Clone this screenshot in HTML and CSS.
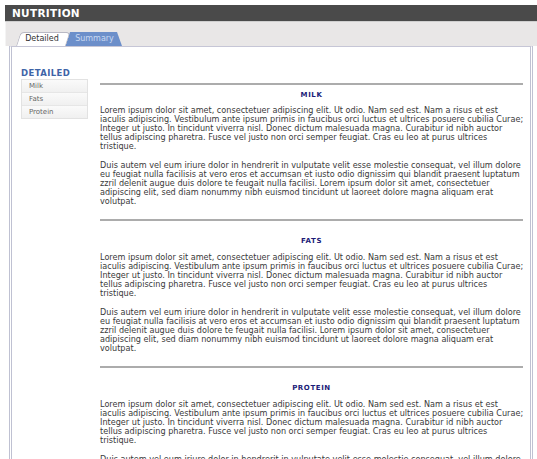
FILE: index.html
```html
<!DOCTYPE html>
<html>
<head>
<meta charset="utf-8">
<link rel="stylesheet" href="styles.css">
</head>
<body>
<div class="page">
  <div class="titlebar">NUTRITION</div>
  <div class="tabbar">
    <div class="tab tab-active">Detailed</div>
    <div class="tab tab-off">Summary</div>
  </div>
  <div class="panel">
    <div class="sidebar">
      <div class="side-title">DETAILED</div>
      <ul class="menu">
        <li>Milk</li>
        <li>Fats</li>
        <li>Protein</li>
      </ul>
    </div>
    <div class="main">
      <div class="section first">
        <h3>MILK</h3>
        <p>Lorem ipsum dolor sit amet, consectetuer adipiscing elit. Ut odio. Nam sed est. Nam a risus et est iaculis adipiscing. Vestibulum ante ipsum primis in faucibus orci luctus et ultrices posuere cubilia Curae; Integer ut justo. In tincidunt viverra nisl. Donec dictum malesuada magna. Curabitur id nibh auctor tellus adipiscing pharetra. Fusce vel justo non orci semper feugiat. Cras eu leo at purus ultrices tristique.</p>
        <p>Duis autem vel eum iriure dolor in hendrerit in vulputate velit esse molestie consequat, vel illum dolore eu feugiat nulla facilisis at vero eros et accumsan et iusto odio dignissim qui blandit praesent luptatum zzril delenit augue duis dolore te feugait nulla facilisi. Lorem ipsum dolor sit amet, consectetuer adipiscing elit, sed diam nonummy nibh euismod tincidunt ut laoreet dolore magna aliquam erat volutpat.</p>
      </div>
      <div class="section">
        <h3>FATS</h3>
        <p>Lorem ipsum dolor sit amet, consectetuer adipiscing elit. Ut odio. Nam sed est. Nam a risus et est iaculis adipiscing. Vestibulum ante ipsum primis in faucibus orci luctus et ultrices posuere cubilia Curae; Integer ut justo. In tincidunt viverra nisl. Donec dictum malesuada magna. Curabitur id nibh auctor tellus adipiscing pharetra. Fusce vel justo non orci semper feugiat. Cras eu leo at purus ultrices tristique.</p>
        <p>Duis autem vel eum iriure dolor in hendrerit in vulputate velit esse molestie consequat, vel illum dolore eu feugiat nulla facilisis at vero eros et accumsan et iusto odio dignissim qui blandit praesent luptatum zzril delenit augue duis dolore te feugait nulla facilisi. Lorem ipsum dolor sit amet, consectetuer adipiscing elit, sed diam nonummy nibh euismod tincidunt ut laoreet dolore magna aliquam erat volutpat.</p>
      </div>
      <div class="section">
        <h3>PROTEIN</h3>
        <p>Lorem ipsum dolor sit amet, consectetuer adipiscing elit. Ut odio. Nam sed est. Nam a risus et est iaculis adipiscing. Vestibulum ante ipsum primis in faucibus orci luctus et ultrices posuere cubilia Curae; Integer ut justo. In tincidunt viverra nisl. Donec dictum malesuada magna. Curabitur id nibh auctor tellus adipiscing pharetra. Fusce vel justo non orci semper feugiat. Cras eu leo at purus ultrices tristique.</p>
        <p>Duis autem vel eum iriure dolor in hendrerit in vulputate velit esse molestie consequat, vel illum dolore eu feugiat nulla facilisis at vero eros et accumsan et iusto odio dignissim qui blandit praesent luptatum zzril delenit augue duis dolore te feugait nulla facilisi. Lorem ipsum dolor sit amet, consectetuer adipiscing elit, sed diam nonummy nibh euismod tincidunt ut laoreet dolore magna aliquam erat volutpat.</p>
      </div>
    </div>
  </div>
</div>
</body>
</html>
```

FILE: styles.css
```css
html, body {
  margin: 0;
  padding: 0;
  background: #ffffff;
}
body {
  font-family: "DejaVu Sans", Verdana, sans-serif;
  color: #333333;
  overflow: hidden;
}
.page {
  padding: 5px 0 0 5px;
}
.titlebar {
  background: #4a4a4a;
  color: #ffffff;
  font-weight: bold;
  font-size: 10.5px;
  letter-spacing: 0.3px;
  height: 16px;
  line-height: 17px;
  padding-left: 7px;
  border-bottom: 1px solid #cfcfcf;
}
.tabbar {
  position: relative;
  z-index: 0;
  background: #e9e7e7;
  height: 24px;
  display: flex;
  align-items: flex-end;
  padding-left: 10px;
  border-left: 1px solid #f4f4f4;
}
.tab {
  position: relative;
  height: 14px;
  line-height: 14px;
  font-size: 8px;
  text-align: center;
}
.tab::before {
  content: "";
  position: absolute;
  top: 0;
  bottom: 0;
  left: 0;
  right: 0;
  z-index: -1;
  border-radius: 4px 4px 0 0;
}
.tab-active {
  width: 48px;
  color: #333333;
  z-index: 2;
  padding-left: 2px;
}
.tab-active::before {
  background: #ffffff;
  border: 1px solid #b9b9c4;
  border-bottom: none;
  transform: skewX(-18deg);
  transform-origin: bottom left;
}
.tab-off {
  width: 55px;
  color: #c9d9f2;
  z-index: 1;
  margin-left: -1px;
  padding-left: 2px;
}
.tab-off::before {
  background: #6c8fca;
  clip-path: polygon(0 100%, 5px 0, calc(100% - 5px) 0, 100% 100%);
  border-radius: 3px 3px 0 0;
}
.panel {
  display: flex;
  margin-left: 4px;
  margin-right: 4px;
  border-top: 1px solid #c6c6d6;
  border-left: 3px double #bfc1d2;
  border-right: 3px double #bfc1d2;
  background: #ffffff;
  min-height: 420px;
}
.sidebar {
  width: 67px;
  padding: 21px 0 0 9px;
  flex: none;
}
.side-title {
  font-size: 8.5px;
  font-weight: bold;
  color: #3e64a7;
  letter-spacing: 0.4px;
  line-height: 10px;
}
.menu {
  list-style: none;
  margin: 1px 0 0 0;
  padding: 0;
  border: 1px solid #e2e2e2;
  background: #f5f5f5;
}
.menu li {
  font-size: 7px;
  color: #666666;
  height: 12px;
  line-height: 12px;
  padding-left: 7px;
  border-top: 1px solid #e6e6e6;
  background: linear-gradient(#fafafa, #f0f0f0);
}
.menu li:first-child {
  border-top: none;
}
.main {
  flex: 1;
  padding: 36px 7px 0 12px;
}
.section {
  border-top: 2px solid #acacac;
  padding-bottom: 3px;
}
.section h3 {
  margin: 16px 0 0 0;
  font-size: 7px;
  line-height: 9px;
  color: #1c1c78;
  letter-spacing: 0.6px;
  text-align: center;
}
.section.first h3 {
  margin-top: 6px;
}
.section p {
  margin: 7px -2px 10px 0;
  font-size: 8.12px;
  line-height: 9px;
  color: #3a3a3a;
}
.section.first h3 + p {
  margin-top: 6px;
}
.section p + p {
  margin-top: 10px;
}
```
